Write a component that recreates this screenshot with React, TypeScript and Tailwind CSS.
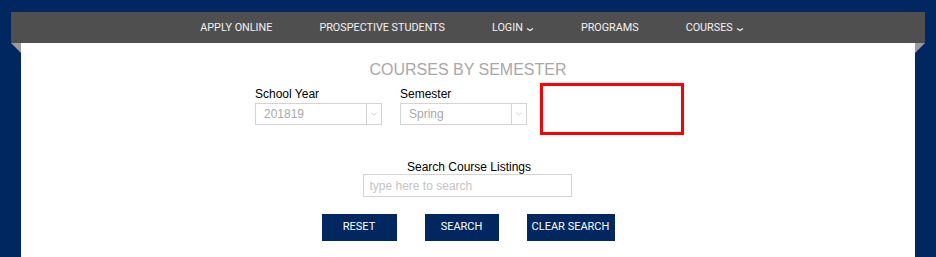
import { ChevronDown } from 'lucide-react';

const navItems = [
  { label: 'APPLY ONLINE', menu: false },
  { label: 'PROSPECTIVE STUDENTS', menu: false },
  { label: 'LOGIN', menu: true },
  { label: 'PROGRAMS', menu: false },
  { label: 'COURSES', menu: true },
];

function Caret() {
  return (
    <svg width="8" height="5" viewBox="0 0 8 5" className="ml-[3px] mt-[2px]">
      <path d="M1 1.5 L4 3.5 L7 1.5" fill="none" stroke="currentColor" strokeWidth="1.3" />
    </svg>
  );
}

function Select({ label, value }: { label: string; value: string }) {
  return (
    <div className="flex flex-col">
      <span className="text-[12px] leading-[14px] text-black mb-[2px]">{label}</span>
      <div className="flex w-[127px] h-[22px] border border-[#d4d4d4] bg-white">
        <span className="flex-1 pl-[8px] text-[12px] leading-[20px] text-[#a9a9a9]">{value}</span>
        <span className="w-[15px] border-l border-[#d4d4d4] flex items-center justify-center text-[#b5b5b5]">
          <ChevronDown size={10} strokeWidth={1.5} />
        </span>
      </div>
    </div>
  );
}

export default function App() {
  return (
    <div className="w-[936px] h-[257px] bg-[#00275f] pt-[12px] flex flex-col overflow-hidden font-['Liberation_Sans',Arial,sans-serif]">
      <nav className="mx-[11px] h-[31px] bg-[#4f4f4f] flex items-center justify-center pl-[8px] pt-[1px] font-['Roboto',sans-serif] text-[10.8px] text-[#f2f2f2]">
        {navItems.map(({ label, menu }) => (
          <span key={label} className="flex items-center px-[23.5px] whitespace-nowrap">
            {label}
            {menu && <Caret />}
          </span>
        ))}
      </nav>

      <div className="flex flex-1 mx-[11px]">
        <div className="w-[10px] flex flex-col">
          <div className="w-[10px] h-[10px] bg-[#9a9a9a] [clip-path:polygon(0_0,100%_0,100%_100%)]" />
        </div>

        <main className="flex-1 bg-white flex flex-col items-center pt-[17px]">
          <h1 className="text-[16px] leading-[20px] text-[#a8a8a8]">COURSES BY SEMESTER</h1>

          <div className="flex items-start mt-[3px] ml-[3px]">
            <div className="mt-[4px] flex gap-[18px]">
              <Select label="School Year" value="201819" />
              <Select label="Semester" value="Spring" />
            </div>
            <div className="ml-[13px] w-[144px] h-[52px] border-[3px] border-[#ff0000]" />
          </div>

          <div className="flex flex-col items-center mt-[25px] mr-[2px]">
            <span className="text-[12px] leading-[14px] text-black ml-[4px]">Search Course Listings</span>
            <input
              placeholder="type here to search"
              className="w-[209px] h-[23px] border border-[#d4d4d4] px-[6px] text-[12px] placeholder:text-[#c4c4c4] outline-none"
            />
          </div>

          <div className="flex gap-[28px] mt-[17px] font-['Roboto',sans-serif] text-[11px] text-white">
            <button className="w-[75px] h-[27px] bg-[#00275f]">RESET</button>
            <button className="w-[74px] h-[27px] bg-[#00275f]">SEARCH</button>
            <button className="w-[88px] h-[27px] bg-[#00275f]">CLEAR SEARCH</button>
          </div>
        </main>

        <div className="w-[10px] flex flex-col">
          <div className="w-[10px] h-[10px] bg-[#9a9a9a] [clip-path:polygon(0_0,100%_0,0_100%)]" />
        </div>
      </div>
    </div>
  );
}
